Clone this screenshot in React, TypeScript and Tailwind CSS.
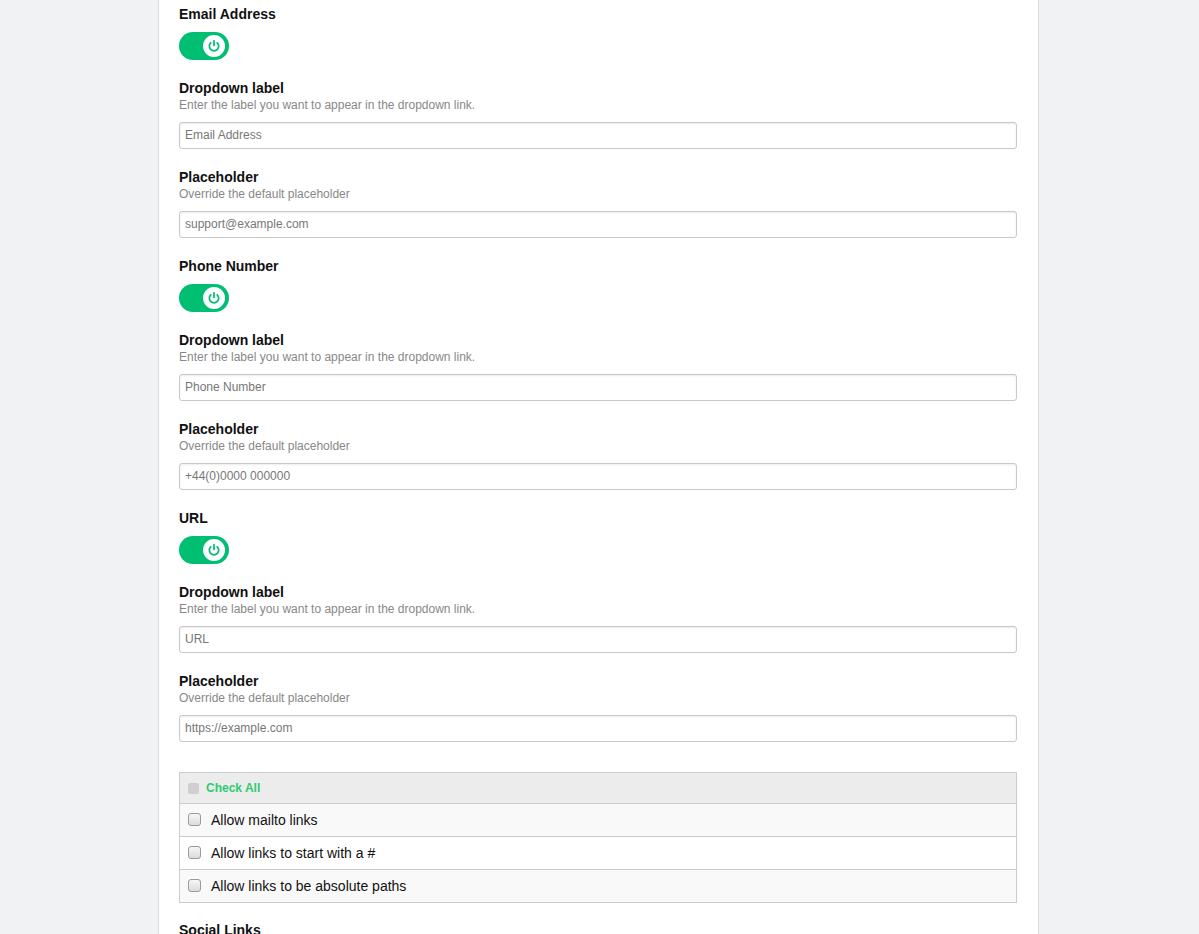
import React from "react";

const font = { fontFamily: '"Liberation Sans", Arial, sans-serif' };

function Toggle() {
  return (
    <div className="w-[50px] h-[28px] rounded-full bg-[#00bf73] flex items-center justify-end pr-[4px]">
      <div className="w-[22px] h-[22px] rounded-full bg-white flex items-center justify-center">
        <svg width="14" height="14" viewBox="0 0 24 24" fill="none" stroke="#00bf73" strokeWidth="3" strokeLinecap="round">
          <path d="M12 3v8" />
          <path d="M17.5 6.5a8 8 0 1 1-11 0" />
        </svg>
      </div>
    </div>
  );
}

function Field({ label, help, placeholder }: { label: string; help: string; placeholder: string }) {
  return (
    <div className="mb-[20px]">
      <div className="text-[14px] leading-[16px] font-bold text-[#111]">{label}</div>
      <div className="mt-[2px] text-[12px] leading-[15px] text-[#888]">{help}</div>
      <input
        className="mt-[9px] w-full h-[27px] px-[5px] pb-[2px] text-[12px] border border-[#c8c8c8] rounded-[3px] shadow-[inset_0_1px_2px_rgba(0,0,0,0.08)] placeholder:text-[#777] outline-none"
        style={font}
        placeholder={placeholder}
      />
    </div>
  );
}

function Section({ title, label, placeholder }: { title: string; label: string; placeholder: string }) {
  return (
    <div>
      <div className="text-[14px] leading-[16px] font-bold text-[#111] mb-[10px]">{title}</div>
      <div className="mb-[20px]">
        <Toggle />
      </div>
      <Field label="Dropdown label" help="Enter the label you want to appear in the dropdown link." placeholder={label} />
      <Field label="Placeholder" help="Override the default placeholder" placeholder={placeholder} />
    </div>
  );
}

const options = ["Allow mailto links", "Allow links to start with a #", "Allow links to be absolute paths"];

export default function App() {
  return (
    <div className="min-h-[934px] bg-[#f1f2f3]" style={font}>
      <div className="ml-[158px] w-[881px] min-h-[934px] bg-white border-x border-[#dcdcdc] pl-[20px] pr-[21px] pt-[6px]">
        <Section title="Email Address" label="Email Address" placeholder="support@example.com" />
        <Section title="Phone Number" label="Phone Number" placeholder="+44(0)0000 000000" />
        <Section title="URL" label="URL" placeholder="https://example.com" />

        <div className="mt-[30px] border border-[#cccccc] mb-[19px]">
          <div className="h-[30px] bg-[#ececec] flex items-center px-[8px] gap-[7px]">
            <span className="w-[11px] h-[11px] rounded-[2px] bg-[#cfcfcf]" />
            <span className="text-[12px] font-bold text-[#2ecc71]">Check All</span>
          </div>
          {options.map((o, i) => (
            <div
              key={o}
              className={`h-[33px] border-t border-[#cccccc] flex items-center px-[8px] gap-[10px] ${i % 2 === 0 ? "bg-[#f9f9f9]" : "bg-white"}`}
            >
              <span className="w-[13px] h-[13px] rounded-[3px] border border-[#9a9a9a] bg-gradient-to-b from-[#f6f6f6] to-[#dcdcdc] -mt-[2px]" />
              <span className="text-[14px] text-[#111]">{o}</span>
            </div>
          ))}
        </div>

        <div className="text-[14px] leading-[16px] font-bold text-[#111]">Social Links</div>
      </div>
    </div>
  );
}
